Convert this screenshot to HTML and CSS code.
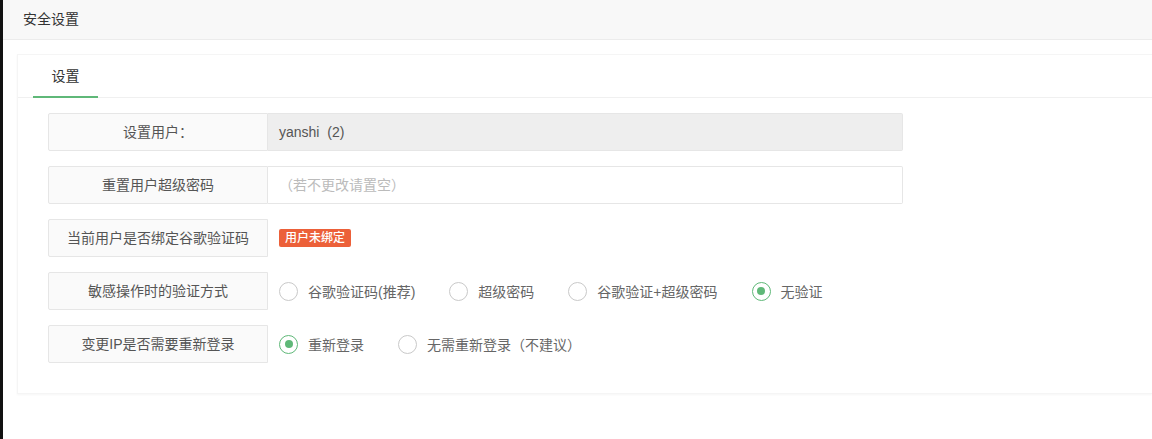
FILE: index.html
```html
<!DOCTYPE html>
<html lang="zh-CN">
<head>
<meta charset="utf-8">
<title>安全设置</title>
<link rel="stylesheet" href="styles.css">
</head>
<body>
<div class="page">
  <div class="strip"></div>
  <div class="main">
    <div class="header">安全设置</div>
    <div class="card">
      <div class="tabs">
        <div class="tab active">设置</div>
      </div>
      <div class="tab-body">
        <div class="row">
          <div class="label">设置用户：</div>
          <div class="field disabled">yanshi&nbsp;&nbsp;(2)</div>
        </div>
        <div class="row">
          <div class="label">重置用户超级密码</div>
          <div class="field placeholder">（若不更改请置空）</div>
        </div>
        <div class="row">
          <div class="label">当前用户是否绑定谷歌验证码</div>
          <div class="inline"><span class="badge">用户未绑定</span></div>
        </div>
        <div class="row">
          <div class="label">敏感操作时的验证方式</div>
          <div class="inline radios">
            <span class="radio"><i class="dot"></i>谷歌验证码(推荐)</span>
            <span class="radio"><i class="dot"></i>超级密码</span>
            <span class="radio"><i class="dot"></i>谷歌验证+超级密码</span>
            <span class="radio checked"><i class="dot"></i>无验证</span>
          </div>
        </div>
        <div class="row">
          <div class="label">变更IP是否需要重新登录</div>
          <div class="inline radios">
            <span class="radio checked"><i class="dot"></i>重新登录</span>
            <span class="radio"><i class="dot"></i>无需重新登录（不建议）</span>
          </div>
        </div>
      </div>
    </div>
  </div>
</div>
</body>
</html>
```

FILE: styles.css
```css
* { box-sizing: border-box; }
html, body {
  margin: 0;
  padding: 0;
  background: #fff;
}
body {
  font-family: "Helvetica Neue", "Liberation Sans", "Noto Sans CJK SC", sans-serif;
  font-size: 14px;
  color: #666;
  height: 439px;
  overflow: hidden;
}
.page {
  display: flex;
  height: 439px;
}
.strip {
  width: 3px;
  flex: none;
  background: #111;
}
.main {
  flex: 1;
  min-width: 0;
}
.header {
  height: 40px;
  line-height: 38px;
  padding-left: 20px;
  background: #f8f8f8;
  border-bottom: 1px solid #ececec;
  color: #333;
}
.card {
  margin: 14px 0 0 14px;
  border: 1px solid #f5f5f5;
  border-right: none;
  box-shadow: 0 1px 2px rgba(0, 0, 0, 0.04);
  padding-bottom: 15px;
}
.tabs {
  height: 43px;
  border-bottom: 1px solid #f0f0f0;
  padding-left: 15px;
  display: flex;
}
.tab {
  width: 65px;
  text-align: center;
  line-height: 42px;
  color: #333;
  position: relative;
}
.tab.active::after {
  content: "";
  position: absolute;
  left: 0;
  right: 0;
  bottom: -1px;
  height: 2px;
  background: #5fb878;
}
.tab-body {
  padding: 15px 0 0 30px;
}
.row {
  display: flex;
  height: 38px;
  margin-bottom: 15px;
}
.label {
  width: 220px;
  flex: none;
  border: 1px solid #e6e6e6;
  background: #fafafa;
  text-align: center;
  line-height: 36px;
  color: #555;
  border-radius: 2px 0 0 2px;
}
.field {
  width: 635px;
  border: 1px solid #e6e6e6;
  border-left: none;
  line-height: 36px;
  padding-left: 11px;
  border-radius: 0 2px 2px 0;
}
.field.disabled {
  background: #eee;
  color: #555;
}
.field.placeholder {
  color: #bbb;
  background: #fff;
}
.inline {
  display: flex;
  align-items: center;
  padding-left: 11px;
}
.badge {
  display: inline-block;
  height: 18px;
  line-height: 18px;
  padding: 0 6px;
  background: #ec6039;
  color: #fff;
  font-size: 12px;
  font-weight: 500;
  border-radius: 2px;
}
.radios {
  gap: 34px;
}
.radio {
  display: flex;
  align-items: center;
  color: #666;
}
.dot {
  width: 19px;
  height: 19px;
  border: 1px solid #c9c9c9;
  border-radius: 50%;
  margin-right: 10px;
  position: relative;
}
.radio.checked .dot {
  border-color: #5fb878;
}
.radio.checked .dot::after {
  content: "";
  position: absolute;
  left: 4.5px;
  top: 4.5px;
  width: 8px;
  height: 8px;
  border-radius: 50%;
  background: #5fb878;
}
```
